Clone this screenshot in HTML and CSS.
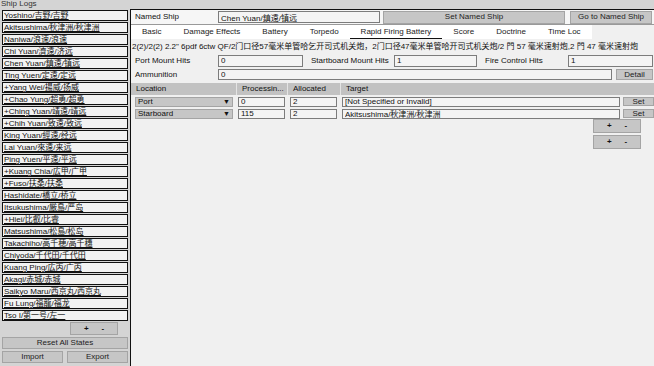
FILE: index.html
```html
<!DOCTYPE html>
<html>
<head>
    <title>Ship Logs</title>
    <meta charset="utf8" />
    <link rel="stylesheet" href="styles.css">
</head>
<body>
    <div class="title">Ship Logs</div>
    <div class="app">
        <div class="sidebar">
            <div class="ship-list">
                <a class="ship">Yoshino/吉野/吉野</a>
                <a class="ship">Akitsushima/秋津洲/秋津洲</a>
                <a class="ship">Naniwa/浪速/浪速</a>
                <a class="ship">Chi Yuan/濟遠/济远</a>
                <a class="ship">Chen Yuan/鎮遠/镇远</a>
                <a class="ship">Ting Yuen/定遠/定远</a>
                <a class="ship">+Yang Wei/揚威/扬威</a>
                <a class="ship">+Chao Yung/超勇/超勇</a>
                <a class="ship">+Ching Yuan/靖遠/靖远</a>
                <a class="ship">+Chih Yuan/致遠/致远</a>
                <a class="ship">King Yuan/經遠/经远</a>
                <a class="ship">Lai Yuan/來遠/来远</a>
                <a class="ship">Ping Yuen/平遠/平远</a>
                <a class="ship">+Kuang Chia/広甲/广甲</a>
                <a class="ship">+Fuso/扶桑/扶桑</a>
                <a class="ship">Hashidate/橋立/桥立</a>
                <a class="ship">Itsukushima/厳島/严岛</a>
                <a class="ship">+Hiei/比叡/比睿</a>
                <a class="ship">Matsushima/松島/松岛</a>
                <a class="ship">Takachiho/高千穂/高千穗</a>
                <a class="ship">Chiyoda/千代田/千代田</a>
                <a class="ship">Kuang Ping/広丙/广丙</a>
                <a class="ship">Akagi/赤城/赤城</a>
                <a class="ship">Saikyo Maru/西京丸/西京丸</a>
                <a class="ship">Fu Lung/福龍/福龙</a>
                <a class="ship">Tso I/第一号/左一</a>
            </div>
            <div class="pm-row">
                <button class="btn pm"><span>+</span><span>-</span></button>
            </div>
            <button class="btn wide">Reset All States</button>
            <div class="io-row">
                <button class="btn">Import</button>
                <button class="btn">Export</button>
            </div>
        </div>

        <div class="main">
            <div class="named-row">
                <div class="cell-label">Named Ship</div>
                <input class="field named-input" value="Chen Yuan/鎮遠/镇远">
                <button class="btn set-named">Set Named Ship</button>
                <button class="btn go-named">Go to Named Ship</button>
            </div>

            <div class="tabs">
                <div class="tab">Basic</div>
                <div class="tab">Damage Effects</div>
                <div class="tab">Battery</div>
                <div class="tab">Torpedo</div>
                <div class="tab active">Rapid Firing Battery</div>
                <div class="tab">Score</div>
                <div class="tab">Doctrine</div>
                <div class="tab">Time Loc</div>
            </div>

            <div class="desc">2(2)/2(2) 2.2" 6pdf 6ctw QF/2门口径57毫米单管哈乞开司式机关炮，2门口径47毫米单管哈开司式机关炮/2 門 57 毫米速射炮,2 門 47 毫米速射炮</div>

            <div class="hits-row">
                <div class="cell-label">Port Mount Hits</div>
                <input class="field" value="0">
                <div class="cell-label">Startboard Mount Hits</div>
                <input class="field" value="1">
                <div class="cell-label">Fire Control Hits</div>
                <input class="field" value="1">
            </div>

            <div class="ammo-row">
                <div class="cell-label">Ammunition</div>
                <input class="field" value="0">
                <button class="btn detail">Detail</button>
            </div>

            <div class="table">
                <div class="thead">
                    <div class="th">Location</div>
                    <div class="th">Processin...</div>
                    <div class="th">Allocated</div>
                    <div class="th">Target</div>
                </div>
                <div class="tr">
                    <div class="select"><span>Port</span><span class="arrow">▼</span></div>
                    <input class="field" value="0">
                    <input class="field" value="2">
                    <input class="field" value="[Not Specified or Invalid]">
                    <button class="btn set">Set</button>
                </div>
                <div class="tr">
                    <div class="select"><span>Starboard</span><span class="arrow">▼</span></div>
                    <input class="field" value="115">
                    <input class="field" value="2">
                    <input class="field" value="Akitsushima/秋津洲/秋津洲">
                    <button class="btn set">Set</button>
                </div>
            </div>

            <div class="pm-stack">
                <button class="btn pm"><span>+</span><span>-</span></button>
                <button class="btn pm"><span>+</span><span>-</span></button>
            </div>
        </div>
    </div>
</body>
</html>
```

FILE: styles.css
```css
:root {
    --bg: #d4d4d4;
    --panel: #f0f0f0;
    --btn: #c6c6c6;
    --btn-border: #a4a4a4;
    --field: #f4f4f4;
    --field-border: #7c7c7c;
    --head: #c2c2c2;
    --text: #111111;
}

* {
    box-sizing: border-box;
    margin: 0;
    padding: 0;
}

body {
    background: var(--bg);
    color: var(--text);
    font-family: "Liberation Sans", "Noto Sans CJK SC", sans-serif;
    font-size: 8px;
    line-height: 1;
    width: 654px;
    height: 366px;
    overflow: hidden;
}

.title {
    height: 9px;
    padding-left: 1px;
    line-height: 8px;
    color: #333;
}

.app {
    display: grid;
    grid-template-columns: 130px minmax(0, 1fr);
    height: 357px;
}

/* left list */
.sidebar {
    padding: 1px 2px 0 2px;
    display: flex;
    flex-direction: column;
}

.ship-list {
    display: flex;
    flex-direction: column;
    gap: 1px;
}

.ship {
    display: block;
    height: 11px;
    width: 126px;
    border: 1px solid #111;
    background: #f2f2f2;
    padding-left: 1px;
    line-height: 10px;
    text-decoration: underline;
    white-space: nowrap;
    overflow: hidden;
    color: #111;
}

.btn {
    font-family: inherit;
    font-size: 8px;
    background: var(--btn);
    border: 1px solid var(--btn-border);
    color: #222;
    line-height: 1;
}

.pm {
    width: 48px;
    height: 13px;
    display: flex;
    justify-content: space-evenly;
    align-items: center;
    font-weight: bold;
    color: #111;
}

.pm-row {
    display: flex;
    justify-content: flex-end;
    padding: 1px 10px 0 0;
}

.wide {
    margin-top: 2px;
    width: 126px;
    height: 12px;
}

.io-row {
    margin-top: 2px;
    display: grid;
    grid-template-columns: 61px 61px;
    justify-content: space-between;
    width: 126px;
}

.io-row .btn {
    height: 12px;
}

/* right panel */
.main {
    background: var(--panel);
    border-left: 1px solid #111;
    border-top: 1px solid #111;
    overflow: hidden;
}

.cell-label {
    padding-left: 4px;
    white-space: nowrap;
    align-self: center;
}

.field {
    font-family: inherit;
    font-size: 8px;
    background: var(--field);
    border: 1px solid var(--field-border);
    color: #111;
    padding: 0 2px;
    height: 12px;
    min-width: 0;
    outline: none;
}

.named-row {
    display: grid;
    grid-template-columns: 87px 162px 185px 87px;
    align-items: center;
    height: 15px;
    border-bottom: 1px solid #999;
    background: #f6f6f6;
}

.named-row .btn {
    height: 13px;
}

.set-named {
    margin-left: 3px;
}

.go-named {
    margin-left: 5px;
}

.tabs {
    display: flex;
    background: #ffffff;
    width: fit-content;
    height: 14px;
    align-items: center;
}

.tab {
    padding: 0 11px;
    height: 14px;
    line-height: 13px;
    white-space: nowrap;
    color: #222;
}

.tab.active {
    border-bottom: 1px solid #111;
}

.desc {
    height: 15px;
    line-height: 15px;
    padding-left: 1px;
    white-space: nowrap;
    overflow: hidden;
}

.hits-row {
    display: grid;
    grid-template-columns: 83px 85px 83px 83px 83px 85px;
    column-gap: 4px;
    height: 13px;
    align-items: center;
}

.ammo-row {
    display: grid;
    grid-template-columns: 83px 394px 37px;
    column-gap: 4px;
    height: 13px;
    align-items: center;
    margin-top: 1px;
}

.ammo-row .field,
.detail {
    height: 11px;
}

.table {
    margin-top: 2px;
}

.thead {
    display: grid;
    grid-template-columns: 105px 51px 53px 1fr;
    background: var(--head);
    height: 12px;
    align-items: center;
}

.th {
    padding-left: 5px;
    height: 12px;
    line-height: 12px;
    border-left: 1px solid #e4e4e4;
}

.th:first-child {
    border-left: none;
}

.tr {
    display: grid;
    grid-template-columns: 98px 47px 47px 278px 29px;
    column-gap: 5px;
    padding-left: 4px;
    height: 11px;
    align-items: center;
    margin-top: 1px;
}

.tr .field {
    height: 10px;
    line-height: 8px;
}

.select {
    background: var(--btn);
    border: 1px solid var(--btn-border);
    height: 10px;
    display: flex;
    justify-content: space-between;
    align-items: center;
    padding: 0 2px;
}

.arrow {
    font-size: 7px;
}

.set {
    height: 9px;
    margin-left: -2px;
}

.pm-stack {
    display: flex;
    flex-direction: column;
    align-items: flex-end;
    gap: 2px;
    padding-right: 13px;
}

.pm-stack .pm {
    height: 14px;
}
```
